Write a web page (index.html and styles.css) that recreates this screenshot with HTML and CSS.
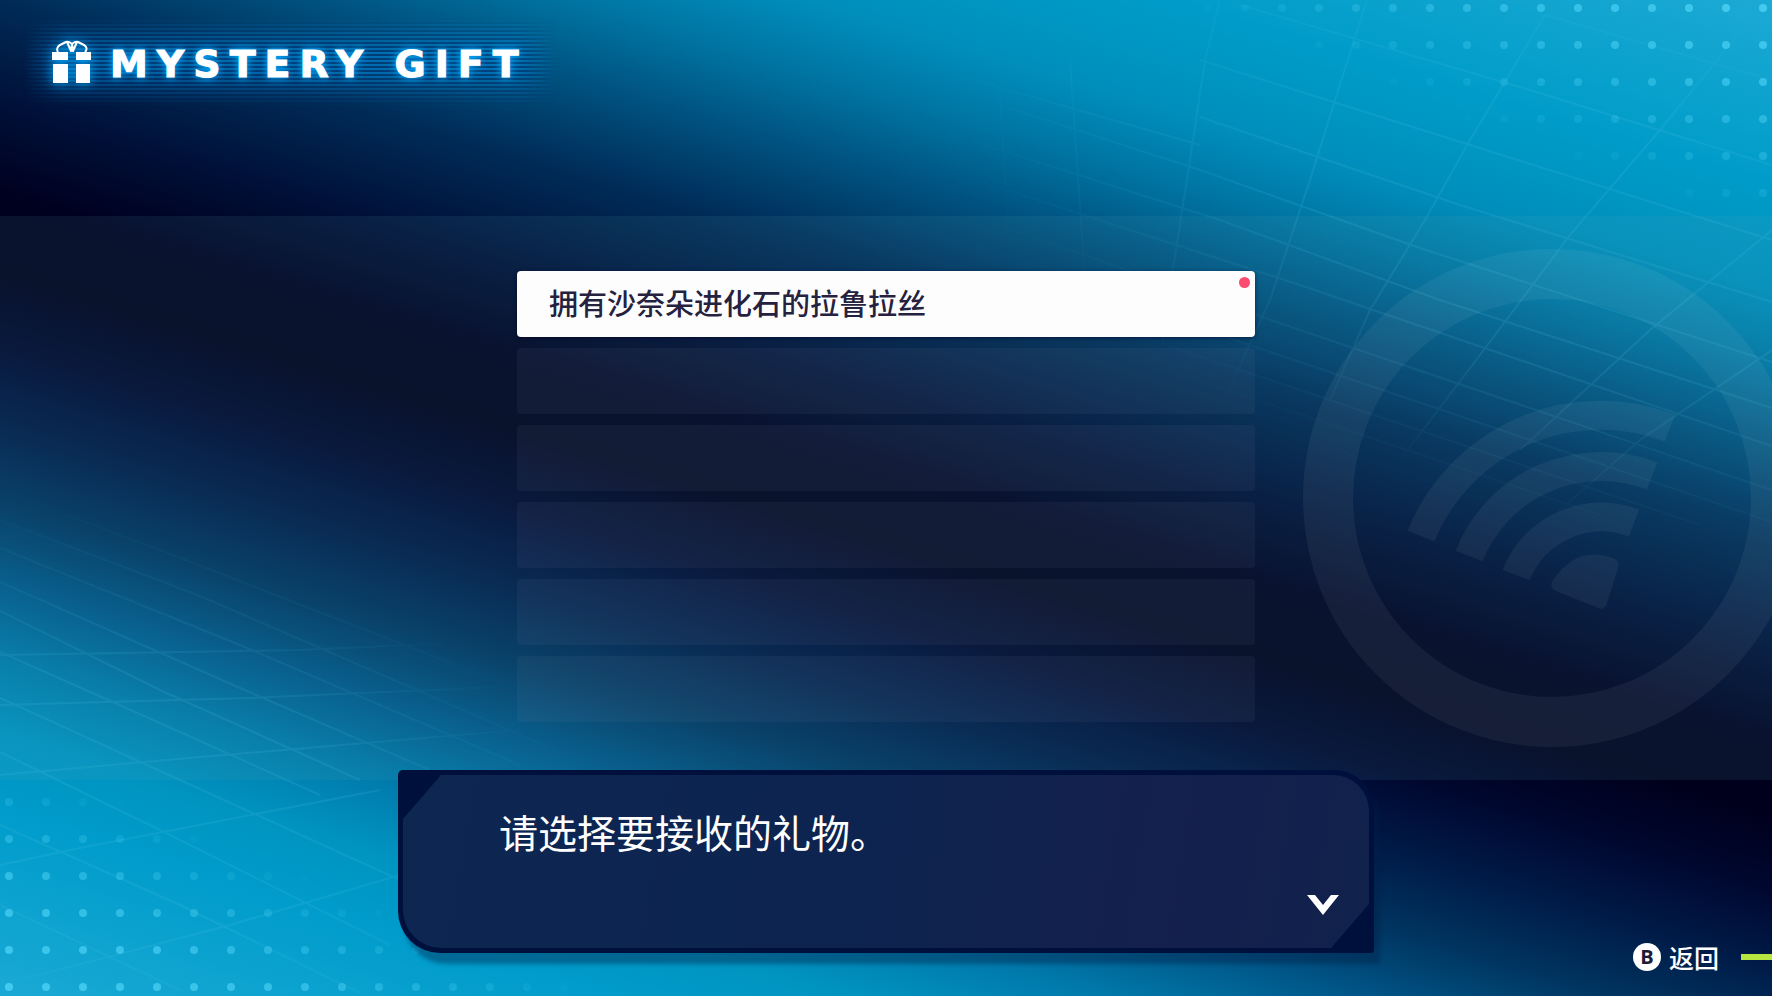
FILE: index.html
```html
<!DOCTYPE html>
<html lang="zh-CN">
<head>
    <meta charset="UTF-8">
    <meta name="viewport" content="width=device-width, initial-scale=1.0">
    <title>Mystery Gift</title>
    <link rel="stylesheet" href="styles.css">
</head>
<body>
    <!-- Backdrop: grid lines, dots -->
    <svg class="backdrop" viewBox="0 0 1772 996" preserveAspectRatio="xMidYMid slice" aria-hidden="true">
        <defs>
            <pattern id="dotsTop" x="1745" y="-10" width="37" height="37" patternUnits="userSpaceOnUse">
                <circle cx="18" cy="18" r="4" fill="#4fd4f7" />
            </pattern>
            <pattern id="dotsBottom" x="-9" y="969" width="37" height="37" patternUnits="userSpaceOnUse">
                <circle cx="18" cy="18" r="4" fill="#4fd4f7" />
            </pattern>
            <linearGradient id="fadeTop" gradientUnits="userSpaceOnUse" x1="1772" y1="0" x2="1672" y2="250">
                <stop offset="0" stop-color="#fff" stop-opacity="0.8" />
                <stop offset="0.3" stop-color="#fff" stop-opacity="0.6" />
                <stop offset="0.85" stop-color="#fff" stop-opacity="0" />
            </linearGradient>
            <linearGradient id="fadeBottom" gradientUnits="userSpaceOnUse" x1="0" y1="996" x2="100" y2="746">
                <stop offset="0" stop-color="#fff" stop-opacity="0.8" />
                <stop offset="0.4" stop-color="#fff" stop-opacity="0.6" />
                <stop offset="0.85" stop-color="#fff" stop-opacity="0" />
            </linearGradient>
            <radialGradient id="glowTop" gradientUnits="userSpaceOnUse" cx="0" cy="0" r="1" gradientTransform="translate(1560 230) rotate(17) scale(660 300)">
                <stop offset="0.4" stop-color="#fff" />
                <stop offset="1" stop-color="#fff" stop-opacity="0" />
            </radialGradient>
            <radialGradient id="glowBottom" gradientUnits="userSpaceOnUse" cx="0" cy="0" r="1" gradientTransform="translate(160 800) rotate(17) scale(500 290)">
                <stop offset="0.4" stop-color="#fff" />
                <stop offset="1" stop-color="#fff" stop-opacity="0" />
            </radialGradient>
            <mask id="maskTop"><rect x="1160" width="612" height="216" fill="url(#fadeTop)" /></mask>
            <mask id="maskBottom"><rect y="780" width="800" height="216" fill="url(#fadeBottom)" /></mask>
            <mask id="gridTop"><rect width="1772" height="996" fill="url(#glowTop)" /></mask>
            <mask id="gridBottom"><rect width="1772" height="996" fill="url(#glowBottom)" /></mask>
        </defs>
        <g class="grid-lines" mask="url(#gridTop)">
            <path d="M1240 5L1530 90L1772 165M1545 15L1772 80M1200 60L1470 145L1772 240M1200 117L1460 205L1772 302" />
            <path d="M1000 105L1200 170L1420 248L1772 362M1000 150L1220 220L1440 300L1772 408M960 175L1300 285L1772 446" />
            <path d="M940 205L1300 330L1772 490M940 240L1300 362L1772 522M940 270L1300 390L1700 525M980 310L1300 414L1600 515" />
            <path d="M1000 340L1300 438L1560 525M1060 380L1300 458L1500 524M700 60L1000 150M640 90L940 180M800 30L1200 145" />
            <path d="M1367 0L1335 100L1310 180L1270 300L1220 410M1545 15L1470 140L1425 220L1370 310L1330 400" />
            <path d="M1750 20L1660 130L1570 235L1480 355L1400 460M1772 230L1650 330L1520 450M1772 350L1640 440L1560 510" />
            <path d="M1220 0L1205 60L1190 160L1165 320L1155 420M1070 60L1083 250L1090 420M1000 90L1010 270L1035 420" />
        </g>
        <g class="grid-lines" mask="url(#gridBottom)">
            <path d="M0 490L160 550L520 690M0 520L200 596L560 752M0 548L240 645L520 765M0 582L240 688L430 770" />
            <path d="M0 611L160 690L360 780M0 652L180 732L320 795M0 698L180 780L400 880M0 752L160 830L390 945M0 825L180 905L360 993M0 905L180 990" />
            <path d="M0 655L300 650L520 640M0 705L250 698L520 686M0 775L200 757L520 730M0 865L80 848L380 790M20 980L230 925L400 875" />
            <path d="M110 478L330 560L560 655M180 500L420 590L620 670" />
        </g>
        <rect x="1160" width="612" height="216" fill="url(#dotsTop)" mask="url(#maskTop)" />
        <rect y="780" width="800" height="216" fill="url(#dotsBottom)" mask="url(#maskBottom)" />
    </svg>

    <header class="header">
        <div class="brand">
            <svg class="gift" viewBox="0 0 40 44" aria-hidden="true">
                <path d="M6 12C4 9 6 6 8 5L14 2Q17 1 20 4Q23 1 26 2L32 5C34 6 36 9 33 12M15 2L19 11L20 4L21 11L25 2" fill="none" stroke="#fff" stroke-width="2" stroke-linejoin="round" />
                <path d="M0 12h16v8H0zM24 12h15v8H24zM1 24h15v19H1zM24 24h14v19H24z" fill="#fff" />
            </svg>
            <h1 class="title">MYSTERY GIFT</h1>
        </div>
    </header>

    <main class="band">
        <svg class="emblem" viewBox="0 0 500 500" aria-hidden="true">
            <circle cx="250" cy="250" r="224" fill="none" stroke="#fff" stroke-width="50" />
            <g fill="none" stroke="#fff" stroke-width="29">
                <path d="M214 327A92 92 0 0 1 332 275" />
                <path d="M167 308A142 142 0 0 1 350 228" />
                <path d="M119 288A194 194 0 0 1 368 180" />
            </g>
            <path d="M299 361Q304 360 305 355L316 320Q318 313 311 310Q275 297 251 332Q246 339 254 343Z" fill="#fff" />
        </svg>
        <ul class="gift-list">
            <li><button type="button" class="gift-item">拥有沙奈朵进化石的拉鲁拉丝<span class="new-dot"></span></button></li>
            <li class="empty"></li>
            <li class="empty"></li>
            <li class="empty"></li>
            <li class="empty"></li>
            <li class="empty"></li>
        </ul>
    </main>

    <footer class="footer">
        <section class="dialog">
            <div class="dialog-inner">
                <p class="message">请选择要接收的礼物。</p>
                <svg class="next" viewBox="0 0 32 20" aria-hidden="true">
                    <path d="M0 0H8L16 10L24 0H32L16 20Z" fill="#fff" />
                </svg>
            </div>
        </section>
        <div class="hints">
            <button type="button" class="back"><span class="key">B</span>返回</button>
            <span class="accent"></span>
        </div>
    </footer>
</body>
</html>
```
FILE: styles.css
```css
* {
    box-sizing: border-box;
}

body {
    position: relative;
    display: flex;
    flex-direction: column;
    min-height: 100vh;
    margin: 0;
    overflow-x: hidden;
    color: #fff;
    font-family: "Noto Sans CJK SC", "Noto Sans", sans-serif;
    background: linear-gradient(197deg,
        #1caad4 0%, #009cc9 12%, #008fbc 19%, #0074a2 24%, #005280 29%,
        #002c58 35%, #001038 42%, #00001f 48%, #00001c 53%, #000830 58%, #001b48 63%,
        #003560 68%, #005688 73%, #0079aa 78%, #0093c0 83%, #009ccb 88%, #1aa9d4 100%);
}

.backdrop {
    position: absolute;
    top: 0;
    left: 0;
    width: 100%;
    height: 100%;
}

.grid-lines {
    fill: none;
    stroke: #5cc8e8;
    stroke-width: 2;
    opacity: 0.14;
}

/* Header */
.header {
    position: relative;
    min-height: 216px;
    padding: 38px 52px;
}

.brand {
    position: relative;
    display: inline-flex;
    align-items: center;
    gap: 18px;
}

.brand::before {
    content: "";
    position: absolute;
    inset: -20px -28px;
    background:
        repeating-linear-gradient(rgba(0, 10, 60, 0.5) 0 2px, transparent 2px 4px),
        rgba(0, 140, 220, 0.6);
    -webkit-mask-image: linear-gradient(transparent, #000 40%, #000 60%, transparent), linear-gradient(90deg, transparent, #000 8%, #000 92%, transparent);
    -webkit-mask-composite: source-in;
    mask-composite: intersect;
}

.gift {
    position: relative;
    width: 40px;
    height: 44px;
    filter: drop-shadow(0 0 6px #00a8ff);
}

.title {
    position: relative;
    margin: 0;
    padding-top: 4px;
    font-family: "DejaVu Sans", sans-serif;
    font-size: 38px;
    font-weight: bold;
    line-height: 44px;
    letter-spacing: 9px;
    -webkit-text-stroke: 1px #fff;
    text-shadow: 0 0 6px #00a8ff, 0 0 12px #0090e0;
}

/* Gift list */
.band {
    position: relative;
    flex: 1;
    padding: 55px 24px;
    overflow: hidden;
    background-color: rgba(80, 170, 180, 0.11);
}

.emblem {
    position: absolute;
    top: 32px;
    right: -30px;
    width: 500px;
    height: 500px;
    opacity: 0.05;
}

.gift-list {
    position: relative;
    display: grid;
    gap: 11px;
    max-width: 738px;
    margin: 0 auto;
    padding: 0;
    list-style: none;
}

.gift-item,
.empty {
    height: 66px;
    border-radius: 4px;
}

.gift-item {
    position: relative;
    display: block;
    width: 100%;
    padding: 0 32px 4px;
    border: none;
    background-color: #fdfdfe;
    color: #25223f;
    font-family: inherit;
    font-size: 29px;
    font-weight: 500;
    text-align: left;
    cursor: pointer;
    box-shadow: 0 1px 4px rgba(0, 0, 40, 0.6);
}

.empty {
    background-color: rgba(150, 150, 190, 0.07);
}

.new-dot {
    position: absolute;
    top: 6px;
    right: 5px;
    width: 11px;
    height: 11px;
    border-radius: 50%;
    background-color: #fb4b70;
}

/* Footer */
.footer {
    position: relative;
    display: grid;
    grid-template-columns: 1fr minmax(0, 976px) 1fr;
    min-height: 216px;
}

.dialog {
    grid-column: 2;
    height: 183px;
    margin-top: -10px;
    padding: 5px;
    border-radius: 5px 40px 3px 42px;
    background-color: #00103c;
    box-shadow: 6px 11px 4px rgba(0, 30, 70, 0.4);
}

.dialog-inner {
    display: flex;
    justify-content: space-between;
    height: 100%;
    padding: 28px 30px 33px 96px;
    border-radius: 0 36px 0 38px;
    background: linear-gradient(100deg, #0e2652, #0d2450 45%, #141f4c 80%, #10224c);
    clip-path: polygon(38px 0, 100% 0, 100% calc(100% - 44px), calc(100% - 38px) 100%, 0 100%, 0 44px);
}

.message {
    margin: 0;
    font-size: 39px;
    line-height: 56px;
}

.next {
    align-self: flex-end;
    width: 32px;
    height: 20px;
}

.hints {
    display: flex;
    align-self: end;
    align-items: center;
    justify-content: flex-end;
    gap: 22px;
    padding-bottom: 21px;
}

.back {
    display: flex;
    align-items: center;
    gap: 8px;
    padding: 0;
    border: none;
    background: none;
    color: #fff;
    font-family: inherit;
    font-size: 25px;
    font-weight: 500;
    line-height: 36px;
    cursor: pointer;
}

.key {
    width: 28px;
    height: 28px;
    border-radius: 50%;
    background-color: #fff;
    color: #1c1a38;
    font-family: "Open Sans", sans-serif;
    font-size: 20px;
    font-weight: bold;
    line-height: 28px;
    text-align: center;
}

.accent {
    width: 31px;
    height: 6px;
    background-color: #b8e640;
}
```
